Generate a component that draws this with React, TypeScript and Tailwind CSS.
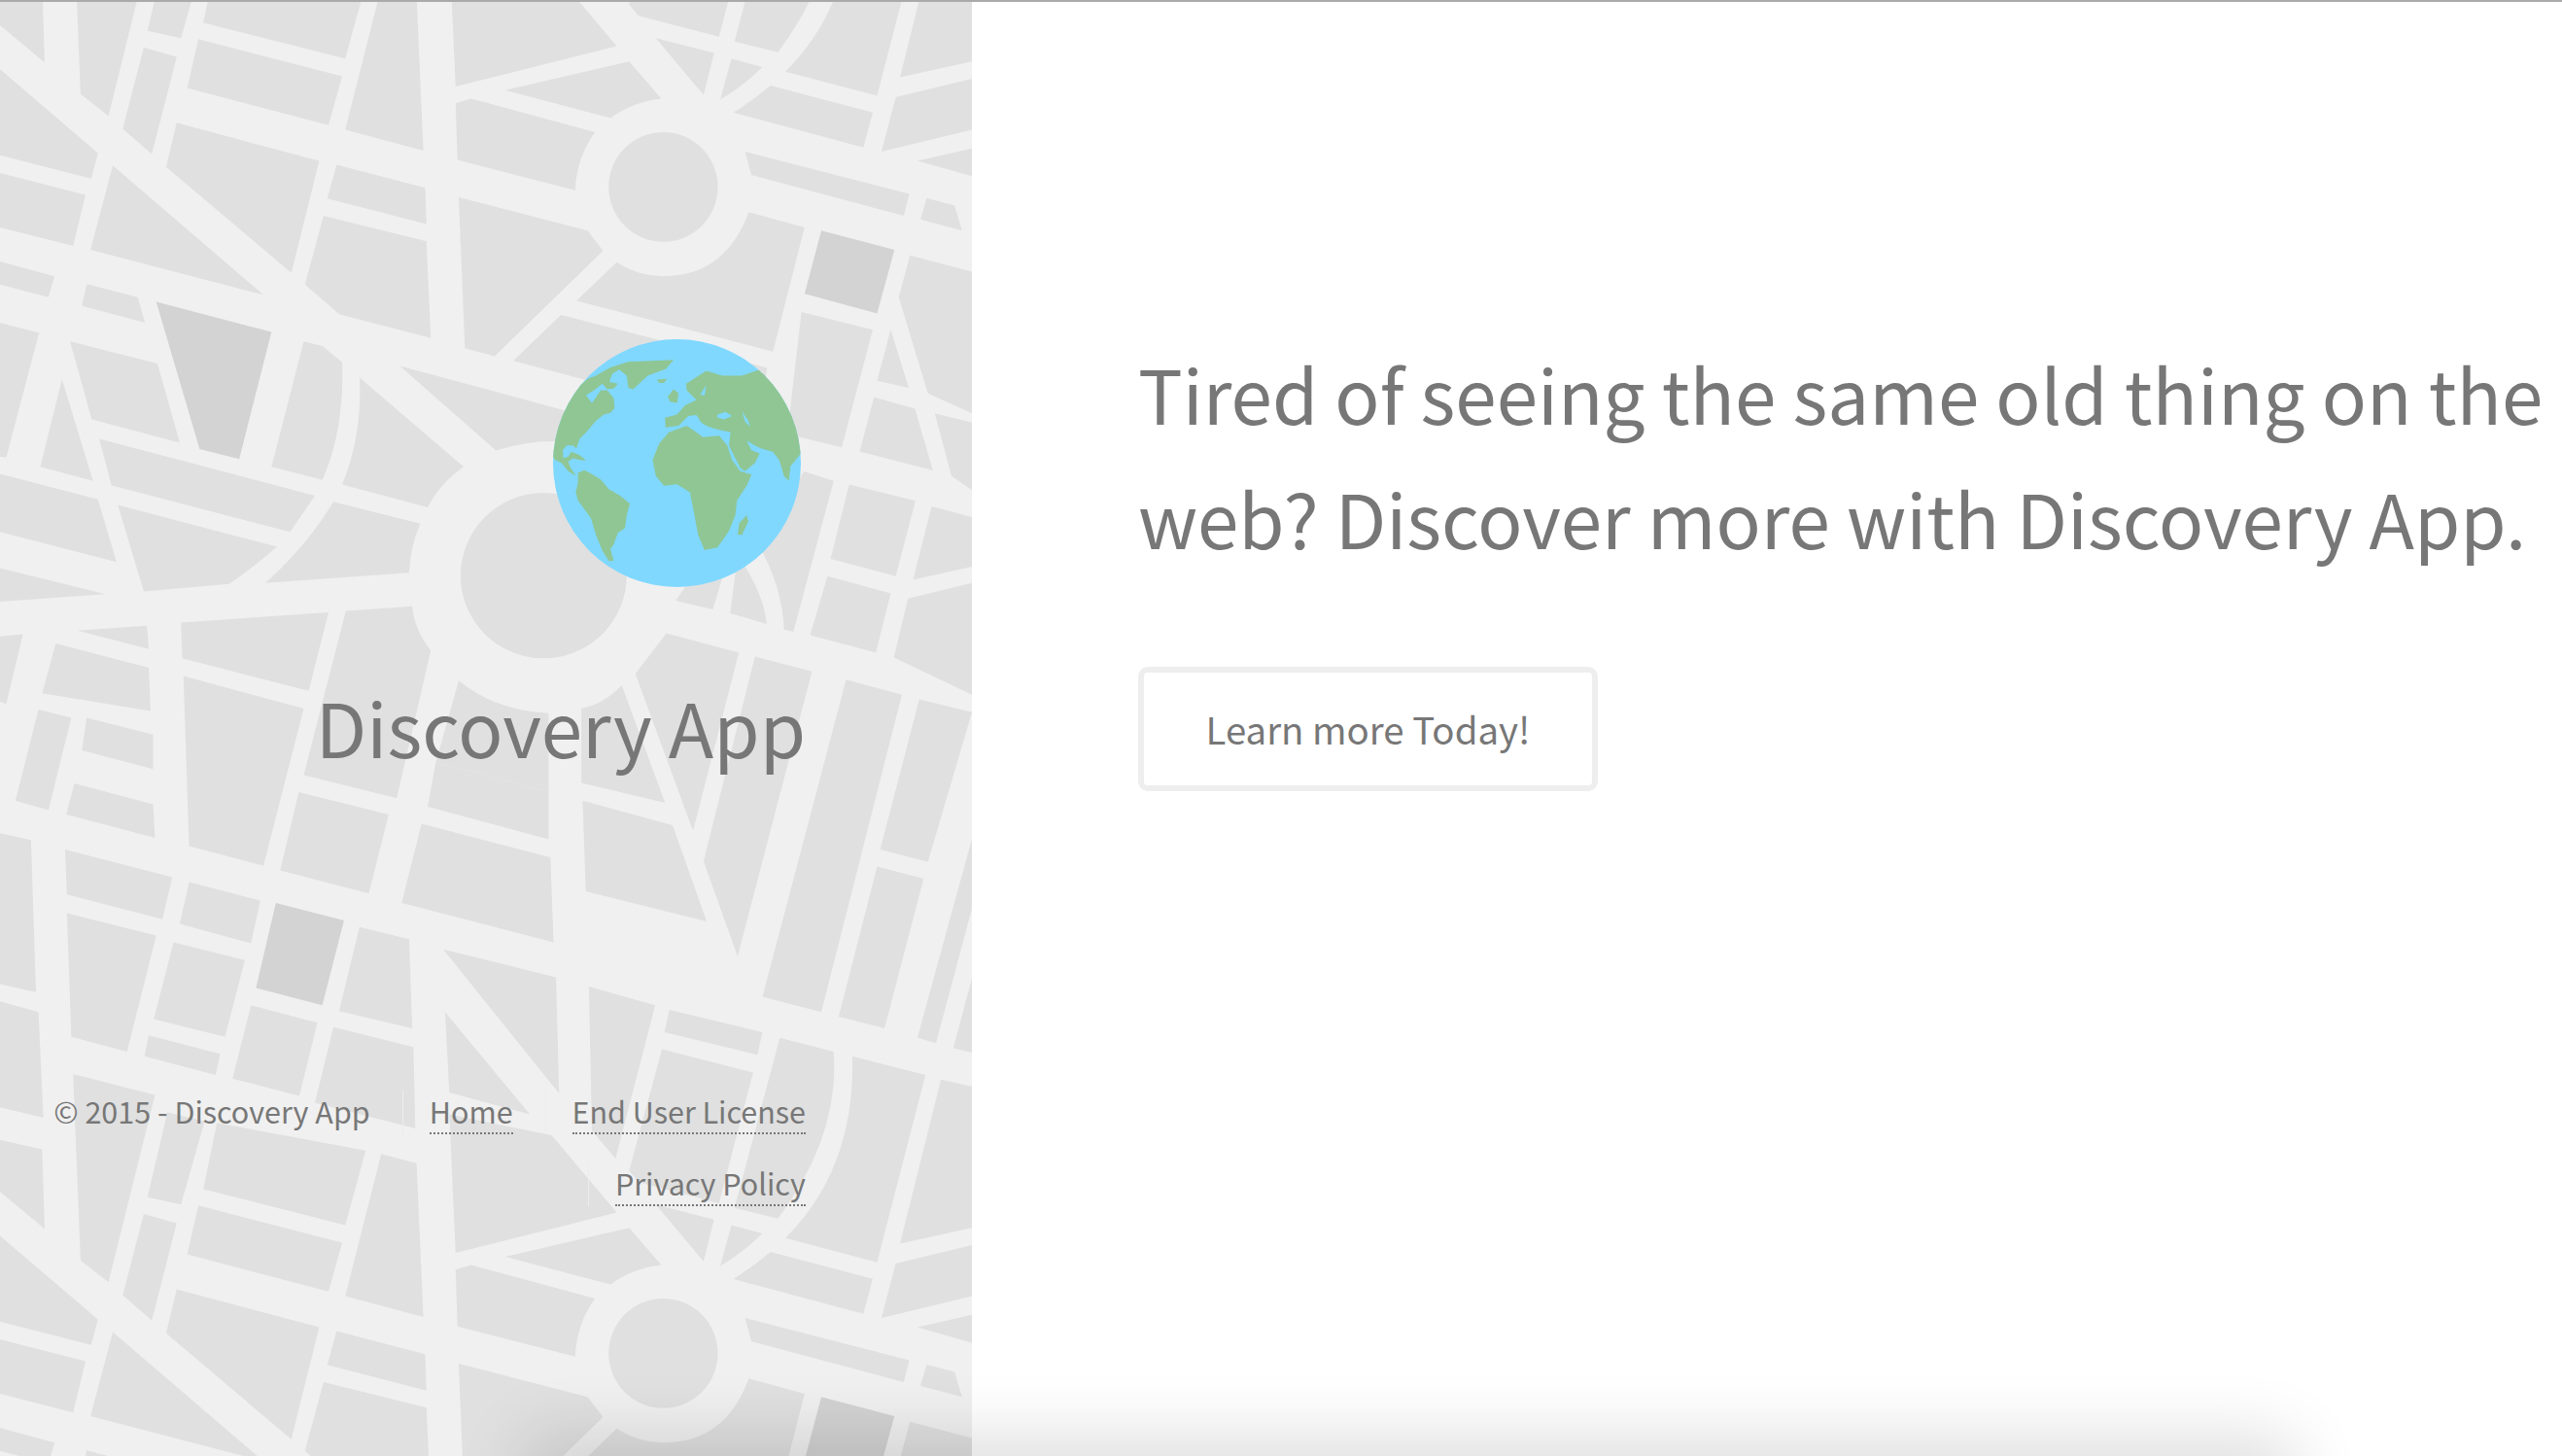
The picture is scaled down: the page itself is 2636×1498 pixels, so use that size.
import React from "react";

const FONT = "font-['Noto_Sans_CJK_SC','Noto_Sans',sans-serif]";

// map blocks, traced at 1568 units wide, one tile repeats every 2509 units
const BLOCKS = [
  "M0 -61L68 -41L72 130L0 50Z",
  "M118 -203L250 -158L175 245L130 198Z",
  "M270 -121L330 -101L292 78L238 62Z",
  "M350 -98L590 -38L557 122L328 45Z",
  "M615 -31L672 -11L683 320L557 275Z",
  "M320 80L552 160L530 265L302 185Z",
  "M232 98L285 118L245 327L198 273Z",
  "M0 145L158 325L147 380L0 330Z",
  "M0 368L138 415L118 525L0 485Z",
  "M285 260L515 342L470 583L268 355Z",
  "M182 352L425 630L146 533Z",
  "M543 350L686 400L688 478L528 423Z",
  "M522 460L688 515L695 723L548 672L492 608Z",
  "M0 558L88 590L78 635L0 608Z",
  "M140 607L222 635L234 690L132 654Z",
  "M0 690L63 712L10 980L0 978Z",
  "M113 730L254 778L290 948L148 898Z",
  "M100 812L150 1030L65 1000Z",
  "M490 730L520 740L552 775Q556 920 520 1028L438 1000Z",
  "M580 808L748 1000Q710 1035 690 1087L552 1038Q585 930 580 808Z",
  "M645 783L915 880L895 945Q845 945 800 965Z",
  "M160 940L508 1062L468 1140L180 1040Z",
  "M0 1015L158 1070L188 1205L0 1140Z",
  "M190 1082L447 1172Q410 1215 370 1252L232 1268Z",
  "M538 1075L678 1122Q662 1170 660 1228L428 1250Q495 1170 538 1075Z",
  "M0 1218L170 1274L0 1290Z",
  "M725 -116L890 -71L995 95L735 182Z",
  "M815 190L1015 128L1067 208Q1020 215 985 250Z",
  "M735 218L760 208L960 280Q930 335 928 405L738 340Z",
  "M1068 -256L1215 -206L1160 75L1030 30L1015 5Z",
  "M1258 -281L1345 -251Q1355 -70 1255 108L1185 85Z",
  "M1058 78L1152 110L1135 200Z",
  "M1180 122L1230 140Q1200 180 1162 210Z",
  "M1375 -241L1493 -201L1415 202L1267 150Q1380 0 1375 -241Z",
  "M1243 180L1408 238L1393 313L1183 238Q1215 212 1243 180Z",
  "M1518 -191L1568 -176L1568 128L1452 162Z",
  "M1445 205L1568 165L1568 275L1422 322Z",
  "M1202 322L1467 413L1458 460L1212 372Z",
  "M1480 342L1568 315L1568 375Z",
  "M1495 422L1540 438L1552 492L1485 468Z",
  "M740 420L948 492L973 535L798 762L750 745Z",
  "M995 560Q1030 590 1070 590Q1170 590 1208 452L1298 485L1247 752L930 643Z",
  "M905 673L1238 787L1225 880L1190 960L950 815L828 772Z",
  "M1293 667L1408 705L1358 958L1270 930Z",
  "M1468 545L1568 580L1568 885L1497 842L1450 635Z",
  "M1437 705L1466 830L1415 815Z",
  "M1410 850L1476 875L1505 1008L1387 967Z",
  "M1508 885L1568 905L1568 1050L1535 1020Z",
  "M1370 1038L1477 1073L1445 1235L1340 1198Z",
  "M1297 1010L1345 1030L1280 1355L1265 1350Q1262 1260 1225 1170Z",
  "M1503 1085L1568 1108L1568 1215L1473 1243Z",
  "M1335 1235L1437 1272L1413 1400L1307 1362Z",
  "M1465 1283L1568 1250L1568 1490L1442 1410Z",
  "M1190 1190Q1232 1270 1237 1338L1178 1315Z",
  "M1165 1240L1150 1307L1090 1288L1110 1250Z",
  "M292 1335L530 1313L498 1482L294 1412Z",
  "M125 1352L237 1342L240 1392Z",
  "M90 1380L240 1432L243 1525L68 1487Z",
  "M0 1365L37 1360L10 1510L0 1505Z",
  "M558 1310L665 1300Q668 1350 695 1395L640 1713L490 1663Z",
  "M296 1450L490 1520L425 1858L305 1816Z",
  "M62 1522L115 1540L78 1738L25 1718Z",
  "M140 1540L247 1576L247 1650L132 1610Z",
  "M740 1460Q800 1525 885 1530L885 1698L703 1636Z",
  "M938 1520Q975 1510 1003 1470L1073 1723L938 1680Z",
  "M1075 1358L1192 1400L1118 1783L1025 1445Z",
  "M1218 1408L1310 1440L1190 2053L1135 1848Z",
  "M1365 1458L1455 1490L1325 2173L1230 2140Z",
  "M1483 1500L1568 1528L1497 1850L1420 1823Z",
  "M1480 2228L1510 2240L1568 1950L1568 1800Z",
  "M1538 2250L1568 2260L1568 2100Z",
  "M40 1653L90 1673L78 1738L25 1718Z",
  "M120 1681L247 1726L250 1798L107 1748Z",
  "M482 1700L627 1748L595 1918L452 1868Z",
  "M690 1731L885 1801L885 1698L703 1636Z",
  "M680 1768L888 1840L893 2023L648 1938Z",
  "M940 1718L1085 1771L1140 1978L945 1913Z",
  "M0 1788L50 1803L58 2130L0 2113Z",
  "M105 1823L278 1883L262 1973L108 1920Z",
  "M305 1893L420 1933L405 2025L290 1983Z",
  "M108 1960L252 2008L205 2258L115 2226Z",
  "M280 2023L395 2061L363 2226L248 2188Z",
  "M580 1990L660 2016L665 2208L547 2171Z",
  "M0 2150L62 2173L70 2400L0 2378Z",
  "M240 2223L355 2263L348 2308L233 2268Z",
  "M405 2158L512 2196L483 2353L375 2316Z",
  "M538 2205L667 2248L670 2423L508 2368Z",
  "M715 2038L897 2098L902 2348Z",
  "M718 2173L855 2393L725 2346Z",
  "M950 2118L1057 2158L993 2488L955 2428Z",
  "M1080 2168L1230 2216L1222 2265L1072 2216Z",
  "M1353 2183L1415 1860L1490 1886L1427 2208Z",
];

const DARK_BLOCKS = [
  "M252 645L438 710L386 983L322 962Z",
  "M1325 492L1443 533L1415 670L1298 628Z",
  "M445 1938L555 1976L520 2158L413 2121Z",
];

function MapTile({ y }: { y: number }) {
  return (
    <g transform={`translate(0 ${y})`}>
      {BLOCKS.map((d, i) => (
        <path key={i} d={d} fill="#e0e0e0" />
      ))}
      {DARK_BLOCKS.map((d, i) => (
        <path key={i} d={d} fill="#d3d3d3" />
      ))}
      <ellipse cx="1070" cy="398" rx="88" ry="118" fill="#e0e0e0" />
      <ellipse cx="877" cy="1234" rx="134" ry="178" fill="#e0e0e0" />
    </g>
  );
}

function Globe() {
  return (
    <svg viewBox="58 58 764 764" className="block w-[255px] h-[255px]">
      <defs>
        <clipPath id="earth">
          <circle cx="440" cy="440" r="382" />
        </clipPath>
      </defs>
      <circle cx="440" cy="440" r="382" fill="#80d8ff" />
      <g clipPath="url(#earth)" fill="#8fc694">
        {/* north america + greenland */}
        <path d="M165 180L190 170L235 145L290 128L430 122L405 150L350 170L305 212L290 208L285 170L262 152L240 165L232 190L258 195L245 210L225 212L210 195L185 215L160 230L178 255L205 215L225 215L245 240L248 270L235 285L215 290L190 310L165 340L140 365L130 395L120 385L100 385L88 400L90 425L105 420L115 405L140 415L160 432L140 430L120 425L105 435L110 450L128 480L105 465L85 440L65 430L40 400L70 300L120 220Z" />
        <path d="M378 182L410 180L400 193L385 192Z" />
        {/* south america */}
        <path d="M135 470L155 462L175 472L205 490L230 520L265 540L295 565L285 600L280 640L258 655L245 690L235 705L245 740L230 742L210 710L190 660L175 610L135 555L128 530L135 500Z" />
        {/* africa */}
        <path d="M365 430L385 380L415 345L470 325L500 345L520 360L570 355L595 385L610 430L635 465L670 475L655 510L625 555L620 600L600 650L565 700L525 708L505 660L490 580L480 530L440 505L400 510L375 480Z" />
        <path d="M655 600L660 620L640 662L627 660L632 625Z" />
        {/* eurasia */}
        <path d="M405 330L403 300L440 290L465 262L500 245L470 215L468 195L500 175L530 155L580 170L640 170L700 150L780 240L830 350L822 410L790 450L785 495L770 480L755 430L735 405L700 395L680 385L655 370L670 400L695 410L680 440L650 465L635 455L600 385L605 345L560 335L530 325L515 315L500 292L475 295L445 325Z" />
        <path d="M412 235L430 212L445 225L440 255L418 250Z" />
      </g>
      <g fill="#80d8ff">
        <path d="M512 228L530 200L525 232Z" />
        <path d="M565 290L590 282L610 295L585 305L565 300Z" />
        <path d="M640 280L660 310L665 328L650 312Z" />
      </g>
    </svg>
  );
}

function FooterLink({ children }: { children: React.ReactNode }) {
  return (
    <li className="ml-[33px] border-l border-[#ececec] pl-[27px]">
      <a className="block border-b-2 border-dotted border-[#777]">{children}</a>
    </li>
  );
}

export default function App() {
  return (
    <div className={`relative flex h-[1498px] overflow-hidden border-t-2 border-[#aaaaaa] bg-white text-[#777777] ${FONT}`}>
      {/* Left panel */}
      <div className="relative flex h-full w-[1000px] shrink-0 flex-col items-end bg-[#f0f0f0] pr-[171px]">
        <svg viewBox="0 0 1568 3132" preserveAspectRatio="none" className="absolute inset-0 h-[1498px] w-full">
          <MapTile y={0} />
          <MapTile y={2509} />
        </svg>
        <div className="relative mt-[347px] mr-[5px]">
          <Globe />
        </div>
        <h1 className="relative mt-[93px] text-[76.4px] leading-[100px] font-normal">Discovery App</h1>
        <ul className="relative mt-[324px] flex w-[790px] flex-wrap justify-end gap-y-[28px] text-[30.5px] leading-[44px]">
          <li>© 2015 - Discovery App</li>
          <FooterLink>Home</FooterLink>
          <FooterLink>End User License</FooterLink>
          <FooterLink>Privacy Policy</FooterLink>
        </ul>
      </div>

      {/* Right panel */}
      <div className="relative min-w-0 flex-1 pt-[338px] pl-[171px]">
        <p className="w-[1464px] text-[76.4px] leading-[128px]">
          Tired of seeing the same old thing on the web? Discover more with Discovery App.
        </p>
        <a className="mt-[90px] flex h-[128px] w-[473px] items-center justify-center rounded-[10px] border-[6px] border-[#eeeeee] text-[38.4px]">
          Learn more Today!
        </a>
      </div>

      {/* Shadow rising from below the page */}
      <div className="absolute top-[1498px] left-[560px] h-[40px] w-[1780px] shadow-[0_0_70px_20px_rgba(0,0,0,0.14)]" />
    </div>
  );
}
